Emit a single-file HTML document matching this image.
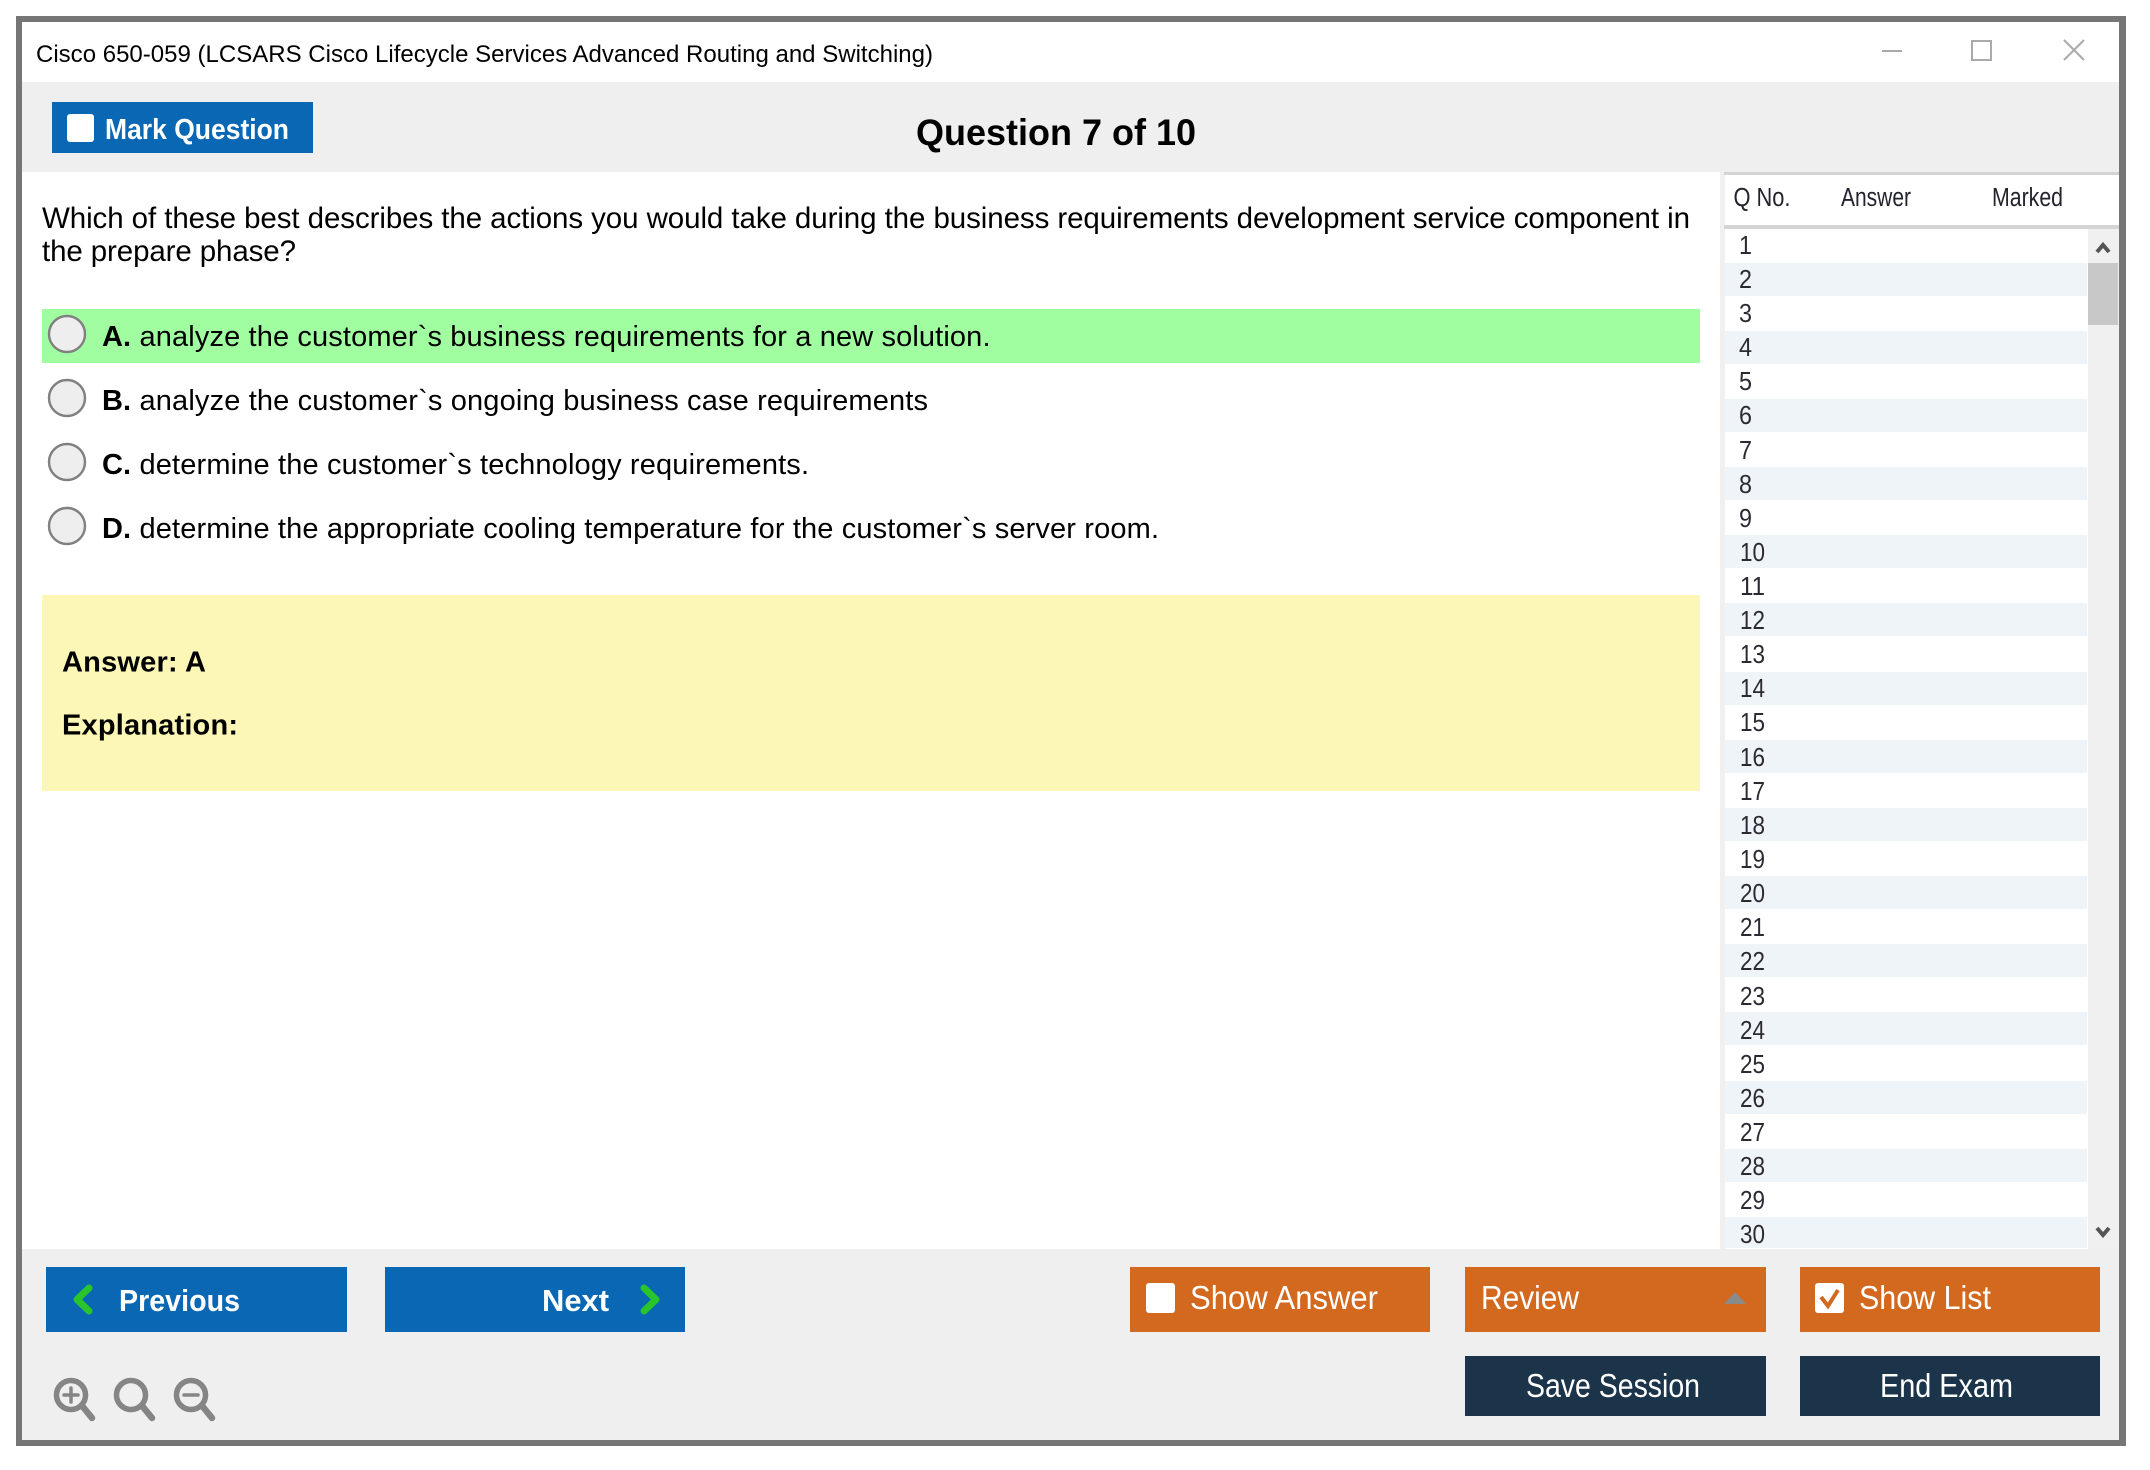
<!DOCTYPE html>
<html lang="en"><head><meta charset="utf-8"><title>Cisco 650-059</title>
<style>
html,body{margin:0;padding:0;background:#fff}
svg{display:block}
text{font-family:"Liberation Sans",sans-serif;fill:#000}
.b{font-weight:bold}
.w{fill:#fff}
.n{font-size:26px;fill:#2a2a33}
.h{font-size:25.500px;fill:#23232e}
.o{font-size:29px}
.bt{font-size:31px;font-weight:bold;fill:#fff}
.bo{font-size:33px;fill:#fff}
</style></head><body>
<svg width="2150" height="1470" viewBox="0 0 2150 1470" xmlns="http://www.w3.org/2000/svg">
<rect width="2150" height="1470" fill="#fff"/>
<rect x="16" y="16" width="2110" height="1430" fill="#767676"/>
<rect x="22" y="22" width="2097" height="1418" fill="#fff"/>
<text x="36" y="62" font-size="24.5" textLength="897" lengthAdjust="spacingAndGlyphs">Cisco 650-059 (LCSARS Cisco Lifecycle Services Advanced Routing and Switching)</text>
<path d="M1882 51H1902" stroke="#aaa" stroke-width="2"/>
<rect x="1972" y="41" width="19" height="19" fill="none" stroke="#aaa" stroke-width="2"/>
<path d="M2064 40L2084 60M2084 40L2064 60" stroke="#aaa" stroke-width="2" fill="none"/>

<rect x="22" y="82" width="2097" height="90" fill="#efefef"/>
<rect x="52" y="102" width="261" height="51" fill="#0967b4"/>
<rect x="67" y="114" width="27" height="28" rx="3" fill="#fff"/>
<text class="bt" x="105" y="139" style="font-size:29px" textLength="184" lengthAdjust="spacingAndGlyphs">Mark Question</text>
<text class="b" x="916" y="145" font-size="37" textLength="280" lengthAdjust="spacingAndGlyphs">Question 7 of 10</text>

<text x="42" y="228" font-size="29.5" textLength="1648" lengthAdjust="spacing">Which of these best describes the actions you would take during the business requirements development service component in</text>
<text x="42" y="261" font-size="29.5" textLength="254" lengthAdjust="spacing">the prepare phase?</text>

<rect x="42" y="309" width="1658" height="54" fill="#a0fea0"/>
<g fill="#eee" stroke="#808080" stroke-width="2.4">
<circle cx="67" cy="334" r="18"/><circle cx="67" cy="398" r="18"/><circle cx="67" cy="462" r="18"/><circle cx="67" cy="526" r="18"/>
</g>
<text class="o b" x="102" y="346">A.</text>
<text class="o" x="139.500" y="346" textLength="851" lengthAdjust="spacing">analyze the customer`s business requirements for a new solution.</text>
<text class="o b" x="102" y="410">B.</text>
<text class="o" x="139.500" y="410" textLength="788.500" lengthAdjust="spacing">analyze the customer`s ongoing business case requirements</text>
<text class="o b" x="102" y="474">C.</text>
<text class="o" x="139.500" y="474" textLength="669.500" lengthAdjust="spacing">determine the customer`s technology requirements.</text>
<text class="o b" x="102" y="538">D.</text>
<text class="o" x="139.500" y="538" textLength="1019.500" lengthAdjust="spacing">determine the appropriate cooling temperature for the customer`s server room.</text>

<rect x="42" y="595" width="1658" height="196" fill="#fdf7b7"/>
<text class="o b" x="62" y="671.500" textLength="144" lengthAdjust="spacing">Answer: A</text>
<text class="o b" x="62" y="734.500" textLength="176" lengthAdjust="spacing">Explanation:</text>

<rect x="1720" y="172" width="5" height="1077" fill="#f0f0f0"/>
<rect x="1724" y="172" width="395" height="3" fill="#d4d4d4"/>
<rect x="1724" y="225" width="395" height="4" fill="#d4d4d4"/>
<text class="h" x="1733.500" y="206" textLength="57" lengthAdjust="spacingAndGlyphs">Q No.</text>
<text class="h" x="1841" y="206" textLength="70" lengthAdjust="spacingAndGlyphs">Answer</text>
<text class="h" x="1992" y="206" textLength="71" lengthAdjust="spacingAndGlyphs">Marked</text>

<g fill="#eff4f9">
<rect x="1725" y="263" width="362" height="33"/><rect x="1725" y="331" width="362" height="33"/><rect x="1725" y="399" width="362" height="33"/><rect x="1725" y="467" width="362" height="33"/><rect x="1725" y="535" width="362" height="33"/><rect x="1725" y="603" width="362" height="33"/><rect x="1725" y="672" width="362" height="33"/><rect x="1725" y="740" width="362" height="33"/><rect x="1725" y="808" width="362" height="33"/><rect x="1725" y="876" width="362" height="33"/><rect x="1725" y="944" width="362" height="33"/><rect x="1725" y="1012" width="362" height="33"/><rect x="1725" y="1081" width="362" height="33"/><rect x="1725" y="1149" width="362" height="33"/><rect x="1725" y="1217" width="362" height="31"/>
</g>
<g transform="translate(0,-1.200)">
<text class="n" x="1739" y="255" textLength="13" lengthAdjust="spacingAndGlyphs">1</text><text class="n" x="1739" y="289" textLength="13" lengthAdjust="spacingAndGlyphs">2</text><text class="n" x="1739" y="323" textLength="13" lengthAdjust="spacingAndGlyphs">3</text><text class="n" x="1739" y="357" textLength="13" lengthAdjust="spacingAndGlyphs">4</text><text class="n" x="1739" y="391" textLength="13" lengthAdjust="spacingAndGlyphs">5</text><text class="n" x="1739" y="425" textLength="13" lengthAdjust="spacingAndGlyphs">6</text><text class="n" x="1739" y="460" textLength="13" lengthAdjust="spacingAndGlyphs">7</text><text class="n" x="1739" y="494" textLength="13" lengthAdjust="spacingAndGlyphs">8</text><text class="n" x="1739" y="528" textLength="13" lengthAdjust="spacingAndGlyphs">9</text>
<text class="n" x="1740" y="562" textLength="25" lengthAdjust="spacingAndGlyphs">10</text><text class="n" x="1740" y="596" textLength="25" lengthAdjust="spacingAndGlyphs">11</text><text class="n" x="1740" y="630" textLength="25" lengthAdjust="spacingAndGlyphs">12</text><text class="n" x="1740" y="664" textLength="25" lengthAdjust="spacingAndGlyphs">13</text><text class="n" x="1740" y="698" textLength="25" lengthAdjust="spacingAndGlyphs">14</text><text class="n" x="1740" y="732" textLength="25" lengthAdjust="spacingAndGlyphs">15</text><text class="n" x="1740" y="767" textLength="25" lengthAdjust="spacingAndGlyphs">16</text><text class="n" x="1740" y="801" textLength="25" lengthAdjust="spacingAndGlyphs">17</text><text class="n" x="1740" y="835" textLength="25" lengthAdjust="spacingAndGlyphs">18</text><text class="n" x="1740" y="869" textLength="25" lengthAdjust="spacingAndGlyphs">19</text>
<text class="n" x="1740" y="903" textLength="25" lengthAdjust="spacingAndGlyphs">20</text><text class="n" x="1740" y="937" textLength="25" lengthAdjust="spacingAndGlyphs">21</text><text class="n" x="1740" y="971" textLength="25" lengthAdjust="spacingAndGlyphs">22</text><text class="n" x="1740" y="1006" textLength="25" lengthAdjust="spacingAndGlyphs">23</text><text class="n" x="1740" y="1040" textLength="25" lengthAdjust="spacingAndGlyphs">24</text><text class="n" x="1740" y="1074" textLength="25" lengthAdjust="spacingAndGlyphs">25</text><text class="n" x="1740" y="1108" textLength="25" lengthAdjust="spacingAndGlyphs">26</text><text class="n" x="1740" y="1142" textLength="25" lengthAdjust="spacingAndGlyphs">27</text><text class="n" x="1740" y="1176" textLength="25" lengthAdjust="spacingAndGlyphs">28</text><text class="n" x="1740" y="1210" textLength="25" lengthAdjust="spacingAndGlyphs">29</text><text class="n" x="1740" y="1244" textLength="25" lengthAdjust="spacingAndGlyphs">30</text>
</g>

<rect x="2088" y="229" width="31" height="1020" fill="#f0f0f0"/>
<rect x="2088" y="263" width="30" height="62" fill="#c8c8c8"/>
<path d="M2097 252L2103 245L2109 252" fill="none" stroke="#555" stroke-width="4"/>
<path d="M2097 1228L2103 1235L2109 1228" fill="none" stroke="#555" stroke-width="4"/>

<rect x="22" y="1249" width="2097" height="191" fill="#efefef"/>

<rect x="46" y="1267" width="301" height="65" fill="#0967b4"/>
<path d="M89 1288L77 1299.500L89 1311" fill="none" stroke="#2ac52a" stroke-width="7" stroke-linecap="round" stroke-linejoin="round"/>
<text class="bt" x="119" y="1311" textLength="121" lengthAdjust="spacingAndGlyphs">Previous</text>
<rect x="385" y="1267" width="300" height="65" fill="#0967b4"/>
<text class="bt" x="542" y="1311" textLength="67" lengthAdjust="spacingAndGlyphs">Next</text>
<path d="M644 1288L656 1299.500L644 1311" fill="none" stroke="#2ac52a" stroke-width="7" stroke-linecap="round" stroke-linejoin="round"/>

<g fill="#d2691f">
<rect x="1130" y="1267" width="300" height="65"/><rect x="1465" y="1267" width="301" height="65"/><rect x="1800" y="1267" width="300" height="65"/>
</g>
<rect x="1146" y="1283" width="29" height="30" rx="3" fill="#fff"/>
<text class="bo" x="1190" y="1309" textLength="188" lengthAdjust="spacingAndGlyphs">Show Answer</text>
<text class="bo" x="1481" y="1309" textLength="98" lengthAdjust="spacingAndGlyphs">Review</text>
<path d="M1735 1292L1746 1304H1724Z" fill="#8a8a8a"/>
<rect x="1815" y="1283" width="29" height="30" rx="3" fill="#fff"/>
<path d="M1821 1297L1828 1306L1838 1290" fill="none" stroke="#d2691f" stroke-width="4"/>
<text class="bo" x="1859" y="1309" textLength="132" lengthAdjust="spacingAndGlyphs">Show List</text>

<g fill="#1b3449">
<rect x="1465" y="1356" width="301" height="60"/><rect x="1800" y="1356" width="300" height="60"/>
</g>
<text class="bo" x="1526" y="1397" textLength="174" lengthAdjust="spacingAndGlyphs">Save Session</text>
<text class="bo" x="1880" y="1397" textLength="133" lengthAdjust="spacingAndGlyphs">End Exam</text>

<g fill="none" stroke="#858585" stroke-width="5.500" stroke-linecap="round">
<circle cx="71" cy="1395" r="14.500"/><path d="M83 1407L92 1418" stroke-width="6.500"/><path d="M64 1395H78M71 1388V1402" stroke-width="3.500"/>
<circle cx="131" cy="1395" r="14.500"/><path d="M143 1407L152 1418" stroke-width="6.500"/>
<circle cx="191" cy="1395" r="14.500"/><path d="M203 1407L212 1418" stroke-width="6.500"/><path d="M184 1395H198" stroke-width="3.500"/>
</g>
</svg>
</body></html>
